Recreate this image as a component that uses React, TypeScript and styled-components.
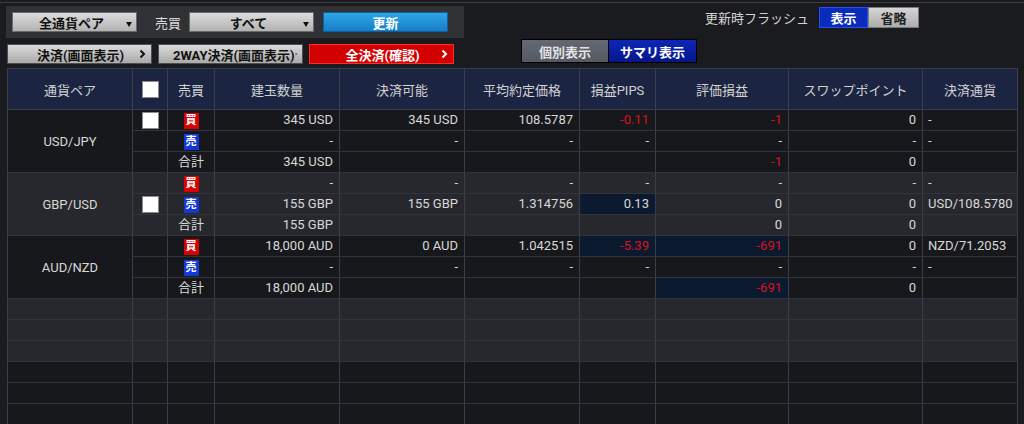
import React from 'react';
import styled, { createGlobalStyle } from 'styled-components';

const Global = createGlobalStyle`
  html, body { margin: 0; padding: 0; background: #1a1b1e; }
  body { font-family: Roboto, "Noto Sans CJK JP", sans-serif; }
  * { box-sizing: border-box; }
`;

const Page = styled.div`
  width: 1024px;
  height: 424px;
  overflow: hidden;
  background: #1a1b1e;
  color: #d6d6d6;
  font-size: 13px;
`;

const TopRule = styled.div`
  margin-top: 2px;
  height: 1px;
  background: #3d3e42;
`;

const Controls = styled.div`
  display: grid;
  grid-template-columns: 464px 1fr;
  padding-top: 3px;
`;

const LeftCol = styled.div`
  display: flex;
  flex-direction: column;
  gap: 6px;
`;

const Panel = styled.div`
  margin-left: 6px;
  width: 458px;
  height: 32px;
  background: #303236;
  display: flex;
  align-items: center;
  padding-left: 6px;
`;

const Dropdown = styled.div`
  width: 125px;
  height: 20px;
  border: 1px solid #6a6a6a;
  background: linear-gradient(#dcdcdc, #b2b2b2);
  color: #111;
  font-weight: 700;
  display: flex;
  align-items: center;
`;

const DropText = styled.span`
  flex: 1;
  text-align: center;
  padding-left: 4px;
`;

const Caret = styled.span`
  align-self: flex-end;
  margin: 0 4px 4px 0;
  width: 0;
  height: 0;
  border-left: 3px solid transparent;
  border-right: 3px solid transparent;
  border-top: 5px solid #111;
`;

const Label = styled.span`
  margin: 0 8px 0 18px;
  color: #dedede;
`;

const UpdateButton = styled.div`
  margin-left: 9px;
  width: 125px;
  height: 20px;
  border: 1px solid #0f5f9e;
  background: linear-gradient(#2ea6e6, #167ec8);
  color: #fff;
  font-weight: 700;
  display: flex;
  align-items: center;
  justify-content: center;
`;

const ButtonRow = styled.div`
  margin-left: 7px;
  display: flex;
  gap: 6px;
`;

const ActionButton = styled.div<{ $danger?: boolean }>`
  width: 145px;
  height: 20px;
  border: 1px solid ${(p) => (p.$danger ? '#ff2a2a' : '#4e4e4e')};
  background: ${(p) =>
    p.$danger ? '#d20000' : 'linear-gradient(#dadada, #aaaaaa)'};
  color: ${(p) => (p.$danger ? '#fff' : '#111')};
  font-weight: 700;
  display: flex;
  align-items: center;
  padding: 0 5px 0 14px;
  white-space: nowrap;
`;

const ActionText = styled.span`
  flex: 1;
  text-align: center;
`;

const RightCol = styled.div`
  display: flex;
  flex-direction: column;
`;

const FlashRow = styled.div`
  margin-top: 1px;
  display: flex;
  justify-content: flex-end;
  align-items: center;
  padding-right: 105px;
  height: 21px;
`;

const FlashLabel = styled.span`
  margin-right: 10px;
  color: #d4d4d4;
`;

const ToggleBtn = styled.div<{ $on?: boolean; $w: number }>`
  width: ${(p) => p.$w}px;
  height: 21px;
  display: flex;
  align-items: center;
  justify-content: center;
  font-weight: 700;
  border: 1px solid ${(p) => (p.$on ? '#2a4df0' : '#7a7a7a')};
  background: ${(p) => (p.$on ? '#0b2bbd' : 'linear-gradient(#d6d6d6, #acacac)')};
  color: ${(p) => (p.$on ? '#fff' : '#222')};
`;

const Tabs = styled.div`
  margin: 11px 0 0 57px;
  display: flex;
  width: fit-content;
  border: 1px solid #000;
  background: #000;
  gap: 1px;
`;

const Tab = styled.div<{ $active?: boolean; $w: number }>`
  width: ${(p) => p.$w}px;
  height: 22px;
  display: flex;
  align-items: center;
  justify-content: center;
  font-weight: 700;
  color: ${(p) => (p.$active ? '#fff' : '#e4e4e4')};
  background: ${(p) =>
    p.$active ? 'linear-gradient(#0c26b8, #06168a)' : 'linear-gradient(#646872, #555962)'};
`;

const Table = styled.table`
  margin: 4px 0 0 7px;
  width: 1010px;
  table-layout: fixed;
  border-collapse: collapse;
`;

const Th = styled.th`
  height: 41px;
  padding: 0;
  background: #1b2541;
  color: #d2d2d2;
  font-weight: 400;
  font-size: 13px;
  text-align: center;
  border: 1px solid #3a3e48;
`;

const Td = styled.td<{ $bg: string; $align?: string; $red?: boolean; $flash?: boolean }>`
  height: 21px;
  padding: ${(p) => (p.$align === 'left' ? '0 0 0 5px' : p.$align === 'center' ? '0' : '0 6px 0 0')};
  text-align: ${(p) => p.$align || 'right'};
  background: ${(p) => (p.$flash ? '#0b1a2e' : p.$bg)};
  color: ${(p) => (p.$red ? '#d8121e' : '#d8d8d8')};
  border-left: 1px solid #3a3e48;
  border-right: 1px solid #3a3e48;
  border-bottom: 1px solid #30343d;
  white-space: nowrap;
  line-height: 20px;
  font-size: 13px;
`;

const PairTd = styled.td<{ $bg: string }>`
  padding: 0;
  text-align: center;
  vertical-align: middle;
  background: ${(p) => p.$bg};
  color: #d8d8d8;
  border: 1px solid #3a3e48;
  border-bottom-color: #30343d;
  font-size: 13px;
`;

const CheckBox = styled.span`
  display: inline-block;
  width: 17px;
  height: 17px;
  background: #fff;
  border: 1px solid #8a8a8a;
  vertical-align: middle;
`;

const Badge = styled.span<{ $buy: boolean }>`
  display: inline-block;
  width: 15px;
  height: 16px;
  line-height: 16px;
  font-size: 11px;
  font-weight: 700;
  color: #fff;
  text-align: center;
  vertical-align: middle;
  background: ${(p) => (p.$buy ? '#d80000' : '#1438d8')};
`;

const Chevron: React.FC<{ color: string }> = ({ color }) => (
  <svg width="7" height="10" viewBox="0 0 7 10">
    <polyline points="1.5,1.5 5,5 1.5,8.5" fill="none" stroke={color} strokeWidth="2" />
  </svg>
);

type V = { t: string; red?: boolean; flash?: boolean };
type Row = {
  side: 'buy' | 'sell' | 'total';
  check?: boolean;
  cells: V[];
  cur: string;
};
type Group = { pair: string; bg: string; rows: Row[] };

const DARK = '#17181b';
const LIGHT = '#27282d';

const v = (t: string, red?: boolean, flash?: boolean): V => ({ t, red, flash });
const dashes = [v('-'), v('-'), v('-'), v('-'), v('-'), v('-')];

const groups: Group[] = [
  {
    pair: 'USD/JPY',
    bg: DARK,
    rows: [
      {
        side: 'buy',
        check: true,
        cells: [v('345 USD'), v('345 USD'), v('108.5787'), v('-0.11', true), v('-1', true), v('0')],
        cur: '-',
      },
      { side: 'sell', cells: dashes, cur: '-' },
      { side: 'total', cells: [v('345 USD'), v(''), v(''), v(''), v('-1', true), v('0')], cur: '' },
    ],
  },
  {
    pair: 'GBP/USD',
    bg: LIGHT,
    rows: [
      { side: 'buy', cells: dashes, cur: '-' },
      {
        side: 'sell',
        check: true,
        cells: [v('155 GBP'), v('155 GBP'), v('1.314756'), v('0.13', false, true), v('0'), v('0')],
        cur: 'USD/108.5780',
      },
      { side: 'total', cells: [v('155 GBP'), v(''), v(''), v(''), v('0'), v('0')], cur: '' },
    ],
  },
  {
    pair: 'AUD/NZD',
    bg: DARK,
    rows: [
      {
        side: 'buy',
        cells: [v('18,000 AUD'), v('0 AUD'), v('1.042515'), v('-5.39', true, true), v('-691', true, true), v('0')],
        cur: 'NZD/71.2053',
      },
      { side: 'sell', cells: dashes, cur: '-' },
      { side: 'total', cells: [v('18,000 AUD'), v(''), v(''), v(''), v('-691', true, true), v('0')], cur: '' },
    ],
  },
];

const widths = [125, 35, 47, 125, 125, 115, 76, 133, 134, 95];
const headers = ['通貨ペア', '', '売買', '建玉数量', '決済可能', '平均約定価格', '損益PIPS', '評価損益', 'スワップポイント', '決済通貨'];
const emptyBgs = [LIGHT, LIGHT, LIGHT, DARK, DARK, DARK];

export default function App() {
  return (
    <Page>
      <Global />
      <TopRule />
      <Controls>
        <LeftCol>
          <Panel>
            <Dropdown>
              <DropText>全通貨ペア</DropText>
              <Caret />
            </Dropdown>
            <Label>売買</Label>
            <Dropdown>
              <DropText>すべて</DropText>
              <Caret />
            </Dropdown>
            <UpdateButton>更新</UpdateButton>
          </Panel>
          <ButtonRow>
            <ActionButton>
              <ActionText>決済(画面表示)</ActionText>
              <Chevron color="#111" />
            </ActionButton>
            <ActionButton>
              <ActionText>2WAY決済(画面表示)</ActionText>
              <Chevron color="#111" />
            </ActionButton>
            <ActionButton $danger>
              <ActionText>全決済(確認)</ActionText>
              <Chevron color="#fff" />
            </ActionButton>
          </ButtonRow>
        </LeftCol>
        <RightCol>
          <FlashRow>
            <FlashLabel>更新時フラッシュ</FlashLabel>
            <ToggleBtn $on $w={49}>表示</ToggleBtn>
            <ToggleBtn $w={51}>省略</ToggleBtn>
          </FlashRow>
          <Tabs>
            <Tab $w={86}>個別表示</Tab>
            <Tab $active $w={87}>サマリ表示</Tab>
          </Tabs>
        </RightCol>
      </Controls>
      <Table>
        <colgroup>
          {widths.map((w, i) => (
            <col key={i} style={{ width: w }} />
          ))}
        </colgroup>
        <thead>
          <tr>
            {headers.map((h, i) => (
              <Th key={i}>{i === 1 ? <CheckBox /> : h}</Th>
            ))}
          </tr>
        </thead>
        <tbody>
          {groups.map((g) =>
            g.rows.map((r, ri) => (
              <tr key={g.pair + ri}>
                {ri === 0 && (
                  <PairTd rowSpan={3} $bg={g.bg}>
                    {g.pair}
                  </PairTd>
                )}
                <Td $bg={g.bg} $align="center">
                  {r.check && <CheckBox />}
                </Td>
                <Td $bg={g.bg} $align="center">
                  {r.side === 'total' ? '合計' : <Badge $buy={r.side === 'buy'}>{r.side === 'buy' ? '買' : '売'}</Badge>}
                </Td>
                {r.cells.map((c, ci) => (
                  <Td key={ci} $bg={g.bg} $red={c.red} $flash={c.flash}>
                    {c.t}
                  </Td>
                ))}
                <Td $bg={g.bg} $align="left">
                  {r.cur}
                </Td>
              </tr>
            ))
          )}
          {emptyBgs.map((bg, i) => (
            <tr key={'e' + i}>
              {widths.map((_, ci) => (
                <Td key={ci} $bg={bg} />
              ))}
            </tr>
          ))}
        </tbody>
      </Table>
    </Page>
  );
}
